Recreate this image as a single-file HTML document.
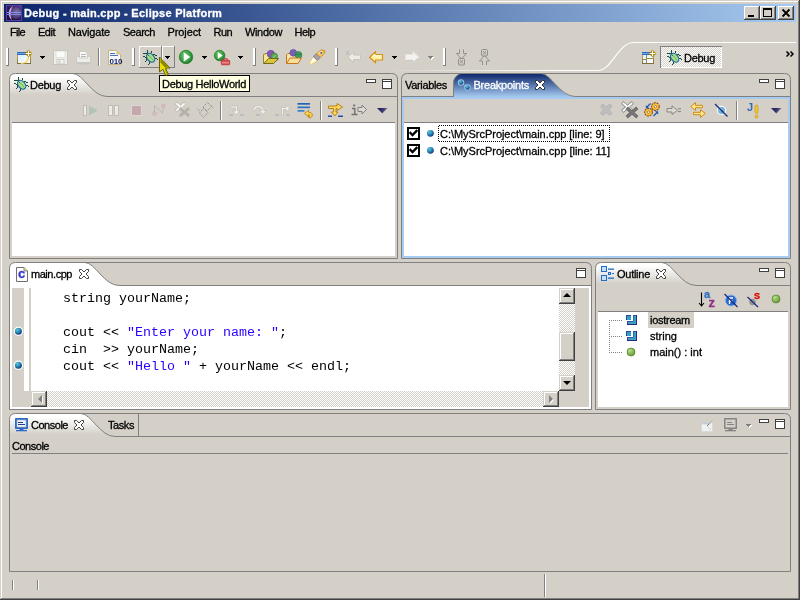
<!DOCTYPE html>
<html><head><meta charset="utf-8"><title>Debug - main.cpp - Eclipse Platform</title>
<style>
html,body{margin:0;padding:0}
body{width:800px;height:600px;overflow:hidden;background:#d4d0c8;position:relative;font-family:"Liberation Sans",sans-serif;font-size:11px;color:#000}
.t{position:absolute;white-space:pre;line-height:13px;font-size:11px;-webkit-text-stroke:0.3px currentColor}
.m{position:absolute;white-space:pre;font-family:"Liberation Mono",monospace;font-size:12px;line-height:17px;transform:scaleX(1.1111);transform-origin:0 0}
svg{position:absolute;left:0;top:0}
#tx{position:absolute;left:0;top:0;width:800px;height:600px;will-change:transform}
</style></head><body>
<svg width="800" height="600" viewBox="0 0 800 600">
<rect x="0" y="0" width="800" height="600" fill="#d4d0c8"/>
<rect x="0" y="599" width="800" height="1" fill="#404040"/>
<rect x="799" y="0" width="1" height="600" fill="#404040"/>
<rect x="1" y="598" width="798" height="1" fill="#808080"/>
<rect x="798" y="1" width="1" height="598" fill="#808080"/>
<rect x="1" y="1" width="797" height="1" fill="#ffffff"/>
<rect x="1" y="1" width="1" height="597" fill="#ffffff"/>
<defs><linearGradient id="tg" x1="0" x2="1" y1="0" y2="0"><stop offset="0" stop-color="#0a246a"/><stop offset="1" stop-color="#a6caf0"/></linearGradient><linearGradient id="tabg" x1="0" x2="0" y1="0" y2="1"><stop offset="0" stop-color="#fff"/><stop offset="0.15" stop-color="#fff"/><stop offset="0.9" stop-color="#d4d0c8"/><stop offset="1" stop-color="#d4d0c8"/></linearGradient><linearGradient id="tabb" x1="0" x2="0" y1="0" y2="1"><stop offset="0" stop-color="#0a246a"/><stop offset="1" stop-color="#a6caf0"/></linearGradient><linearGradient id="pl" gradientUnits="userSpaceOnUse" x1="380" x2="560" y1="0" y2="0"><stop offset="0" stop-color="#d4d0c8"/><stop offset="1" stop-color="#fff"/></linearGradient><pattern id="dith" width="2" height="2" patternUnits="userSpaceOnUse"><rect width="2" height="2" fill="#d4d0c8"/><rect width="1" height="1" fill="#fff"/><rect x="1" y="1" width="1" height="1" fill="#fff"/></pattern><radialGradient id="ball" cx="0.35" cy="0.3" r="0.7"><stop offset="0" stop-color="#64c0d8"/><stop offset="0.5" stop-color="#2a92bc"/><stop offset="1" stop-color="#143c80"/></radialGradient><radialGradient id="gball" cx="0.35" cy="0.3" r="0.7"><stop offset="0" stop-color="#b8e08a"/><stop offset="1" stop-color="#6a9a3a"/></radialGradient><radialGradient id="grun" cx="0.4" cy="0.35" r="0.7"><stop offset="0" stop-color="#7fd07f"/><stop offset="0.6" stop-color="#2f9a3a"/><stop offset="1" stop-color="#1a6a28"/></radialGradient><linearGradient id="mt" x1="0" x2="1" y1="0" y2="0.3"><stop offset="0" stop-color="#18185c"/><stop offset="0.6" stop-color="#38346c"/><stop offset="1" stop-color="#8c88a4"/></linearGradient><pattern id="fd" width="2" height="2" patternUnits="userSpaceOnUse"><rect width="1" height="1" fill="#000"/><rect x="1" y="1" width="1" height="1" fill="#000"/></pattern><pattern id="td" width="2" height="2" patternUnits="userSpaceOnUse"><rect x="1" width="1" height="1" fill="#808080"/><rect y="1" width="1" height="1" fill="#808080"/></pattern></defs>
<rect x="4" y="4" width="792" height="18" fill="url(#tg)"/>
<rect x="744" y="6" width="16" height="14" fill="#d4d0c8"/>
<rect x="744" y="6" width="15" height="1" fill="#ffffff"/>
<rect x="744" y="6" width="1" height="13" fill="#ffffff"/>
<rect x="744" y="19" width="16" height="1" fill="#404040"/>
<rect x="759" y="6" width="1" height="14" fill="#404040"/>
<rect x="745" y="18" width="14" height="1" fill="#808080"/>
<rect x="758" y="7" width="1" height="12" fill="#808080"/>
<rect x="760" y="6" width="16" height="14" fill="#d4d0c8"/>
<rect x="760" y="6" width="15" height="1" fill="#ffffff"/>
<rect x="760" y="6" width="1" height="13" fill="#ffffff"/>
<rect x="760" y="19" width="16" height="1" fill="#404040"/>
<rect x="775" y="6" width="1" height="14" fill="#404040"/>
<rect x="761" y="18" width="14" height="1" fill="#808080"/>
<rect x="774" y="7" width="1" height="12" fill="#808080"/>
<rect x="778" y="6" width="16" height="14" fill="#d4d0c8"/>
<rect x="778" y="6" width="15" height="1" fill="#ffffff"/>
<rect x="778" y="6" width="1" height="13" fill="#ffffff"/>
<rect x="778" y="19" width="16" height="1" fill="#404040"/>
<rect x="793" y="6" width="1" height="14" fill="#404040"/>
<rect x="779" y="18" width="14" height="1" fill="#808080"/>
<rect x="792" y="7" width="1" height="12" fill="#808080"/>
<rect x="748" y="15" width="6" height="2" fill="#000"/>
<rect x="763" y="8" width="9" height="9" fill="#000"/>
<rect x="764" y="10" width="7" height="6" fill="#d4d0c8"/>
<path d="M782.5 9.5 L789.5 16.5 M789.5 9.5 L782.5 16.5" stroke="#000" stroke-width="1.8" fill="none"/>
<g transform="translate(6,5)"><defs><linearGradient id="eg" x1="0" y1="1" x2="1" y2="0"><stop offset="0" stop-color="#120a30"/><stop offset="0.5" stop-color="#2c1c5c"/><stop offset="1" stop-color="#5a3a90"/></linearGradient><radialGradient id="es" cx="0.6" cy="0.4" r="0.6"><stop offset="0" stop-color="#7c74a4"/><stop offset="1" stop-color="#3c3068"/></radialGradient></defs><rect x="0.500" y="0.500" width="15" height="15" fill="url(#eg)" stroke="#5c3c9c"/><circle cx="9.500" cy="8" r="6" fill="url(#es)"/><path d="M6.500 1.500 C2 4 2 12 5.500 14.500 C3.800 11 4 5 6.500 1.500Z" fill="#f4e8ff" stroke="#c080e0" stroke-width="0.5"/><rect x="1" y="7" width="14" height="1" fill="#8890f0"/><rect x="1" y="9" width="14" height="1" fill="#8088e8"/></g>
<rect x="6" y="48" width="1" height="18" fill="#ffffff"/>
<rect x="7" y="48" width="1" height="18" fill="#ffffff"/>
<rect x="8" y="48" width="1" height="18" fill="#808080"/>
<rect x="6" y="65" width="3" height="1" fill="#808080"/>
<rect x="132" y="48" width="1" height="18" fill="#ffffff"/>
<rect x="133" y="48" width="1" height="18" fill="#ffffff"/>
<rect x="134" y="48" width="1" height="18" fill="#808080"/>
<rect x="132" y="65" width="3" height="1" fill="#808080"/>
<rect x="253" y="48" width="1" height="18" fill="#ffffff"/>
<rect x="254" y="48" width="1" height="18" fill="#ffffff"/>
<rect x="255" y="48" width="1" height="18" fill="#808080"/>
<rect x="253" y="65" width="3" height="1" fill="#808080"/>
<rect x="335" y="48" width="1" height="18" fill="#ffffff"/>
<rect x="336" y="48" width="1" height="18" fill="#ffffff"/>
<rect x="337" y="48" width="1" height="18" fill="#808080"/>
<rect x="335" y="65" width="3" height="1" fill="#808080"/>
<rect x="443" y="48" width="1" height="18" fill="#ffffff"/>
<rect x="444" y="48" width="1" height="18" fill="#ffffff"/>
<rect x="445" y="48" width="1" height="18" fill="#808080"/>
<rect x="443" y="65" width="3" height="1" fill="#808080"/>
<rect x="98" y="48" width="1" height="18" fill="#808080"/>
<rect x="99" y="48" width="1" height="18" fill="#ffffff"/>
<rect x="40" y="56" width="5" height="1" fill="#000"/>
<rect x="41" y="57" width="3" height="1" fill="#000"/>
<rect x="42" y="58" width="1" height="1" fill="#000"/>
<rect x="165" y="56" width="5" height="1" fill="#000"/>
<rect x="166" y="57" width="3" height="1" fill="#000"/>
<rect x="167" y="58" width="1" height="1" fill="#000"/>
<rect x="202" y="56" width="5" height="1" fill="#000"/>
<rect x="203" y="57" width="3" height="1" fill="#000"/>
<rect x="204" y="58" width="1" height="1" fill="#000"/>
<rect x="238" y="56" width="5" height="1" fill="#000"/>
<rect x="239" y="57" width="3" height="1" fill="#000"/>
<rect x="240" y="58" width="1" height="1" fill="#000"/>
<rect x="392" y="56" width="5" height="1" fill="#000"/>
<rect x="393" y="57" width="3" height="1" fill="#000"/>
<rect x="394" y="58" width="1" height="1" fill="#000"/>
<rect x="429" y="57" width="5" height="1" fill="#ffffff"/>
<rect x="430" y="58" width="3" height="1" fill="#ffffff"/>
<rect x="431" y="59" width="1" height="1" fill="#ffffff"/>
<rect x="428" y="56" width="5" height="1" fill="#808080"/>
<rect x="429" y="57" width="3" height="1" fill="#808080"/>
<rect x="430" y="58" width="1" height="1" fill="#808080"/>
<defs><linearGradient id="nf" x1="0" x2="0" y1="0" y2="1"><stop offset="0" stop-color="#e4b440"/><stop offset="1" stop-color="#80703c"/></linearGradient><linearGradient id="ni" x1="0" x2="1" y1="0" y2="1"><stop offset="0" stop-color="#d4ecff"/><stop offset="1" stop-color="#ffffff"/></linearGradient></defs>
<g transform="translate(17,50)"><rect x="0.500" y="2.500" width="13" height="11" fill="url(#ni)" stroke="url(#nf)"/><rect x="0" y="2" width="9" height="3" fill="#2c6cc0"/><rect x="0" y="3" width="9" height="1" fill="#6aa4e4"/><path d="M11.500 6.500 C11.500 10.500 9 13.500 4 13.500" stroke="#f8d050" stroke-width="1.200" fill="none"/><path d="M11.5 -0.2999999999999998 L15.3 3.5 L11.5 7.3 L7.7 3.5Z" fill="#a88414"/><path d="M11.5 0.7000000000000002 L11.5 6.3 M8.7 3.5 L14.3 3.5" stroke="#fffbe0" stroke-width="1.100"/></g>
<g transform="translate(53,50)"><rect x="0.500" y="0.500" width="14" height="14" fill="#efeeea" stroke="#c6c4be"/><rect x="3" y="1" width="9" height="6.500" fill="#fbfbfa" stroke="#d4d2cc" stroke-width="0.6"/><rect x="4" y="9.500" width="7" height="4.500" fill="#f6f5f2" stroke="#c4c2bc" stroke-width="0.8"/><rect x="5.500" y="10.500" width="2" height="3" fill="#cfcdc8"/></g>
<g transform="translate(76,50)"><rect x="0.500" y="6.500" width="14" height="6" fill="#eeede9" stroke="#cccac4"/><path d="M3.500 8 L3.500 1.500 L9 1.500 L11.500 4 L11.500 8Z" fill="#fafaf8" stroke="#c8c6c0" stroke-width="0.9"/><rect x="1" y="12" width="13" height="2.500" fill="#c8c6c0"/><rect x="5" y="4" width="5" height="1" fill="#b8b6b0"/><rect x="5" y="6" width="5" height="1" fill="#b8b6b0"/></g>
<g transform="translate(108,50)"><path d="M0.500 0.500 L8.500 0.500 L12.500 4.500 L12.500 14.500 L0.500 14.500Z" fill="#f4f8ff" stroke="#c8b478"/><path d="M8.500 0.500 L8.500 4.500 L12.500 4.500Z" fill="#e0c070"/><rect x="2" y="3" width="5" height="1" fill="#5070c0"/><rect x="2" y="5" width="8" height="1" fill="#5070c0"/></g>
<rect x="139" y="46" width="23" height="1" fill="#ffffff"/>
<rect x="139" y="46" width="1" height="22" fill="#ffffff"/>
<rect x="161" y="46" width="1" height="22" fill="#808080"/>
<rect x="139" y="67" width="23" height="1" fill="#808080"/>
<rect x="162" y="46" width="13" height="1" fill="#ffffff"/>
<rect x="162" y="46" width="1" height="22" fill="#ffffff"/>
<rect x="174" y="46" width="1" height="22" fill="#808080"/>
<rect x="162" y="67" width="13" height="1" fill="#808080"/>
<g transform="translate(143,50)"><g fill="#1c4c3c"><rect x="4" y="0" width="1" height="1"/><rect x="4" y="1" width="1" height="1"/><rect x="4" y="2" width="1" height="1"/><rect x="4" y="3" width="1" height="1"/><rect x="0" y="3" width="1" height="1"/><rect x="1" y="3" width="1" height="1"/><rect x="2" y="3" width="1" height="1"/><rect x="3" y="3" width="1" height="1"/><rect x="8" y="1" width="1" height="1"/><rect x="8" y="2" width="1" height="1"/><rect x="7" y="3" width="1" height="1"/><rect x="10" y="4" width="1" height="1"/><rect x="11" y="4" width="1" height="1"/><rect x="12" y="5" width="1" height="1"/><rect x="13" y="5" width="1" height="1"/><rect x="0" y="6" width="1" height="1"/><rect x="1" y="6" width="1" height="1"/><rect x="2" y="7" width="1" height="1"/><rect x="3" y="7" width="1" height="1"/><rect x="12" y="8" width="1" height="1"/><rect x="13" y="8" width="1" height="1"/><rect x="14" y="9" width="1" height="1"/><rect x="3" y="8" width="1" height="1"/><rect x="3" y="9" width="1" height="1"/><rect x="3" y="10" width="1" height="1"/><rect x="2" y="11" width="1" height="1"/><rect x="6" y="11" width="1" height="1"/><rect x="6" y="12" width="1" height="1"/><rect x="6" y="13" width="1" height="1"/><rect x="5" y="14" width="1" height="1"/></g><ellipse cx="7.700" cy="7.700" rx="3.400" ry="4.900" transform="rotate(-40 7.7 7.7)" fill="#a8dc90" stroke="#1c6c9c" stroke-width="1.2"/><path d="M6 5.500 L10 10" stroke="#68b858" stroke-width="1"/><rect x="5" y="5" width="1" height="1" fill="#2c7c2c"/></g>
<g transform="translate(179,50)"><circle cx="7" cy="7" r="6.700" fill="url(#grun)" stroke="#2a8430" stroke-width="0.9"/><circle cx="7" cy="7" r="5.200" fill="#4cac50" opacity="0.55"/><path d="M4.700 2.200 L11.200 7 L4.700 11.800Z" fill="#fff"/></g>
<g transform="translate(214,50)"><circle cx="5.600" cy="5.500" r="5.300" fill="url(#grun)" stroke="#2a8430" stroke-width="0.8"/><circle cx="5.600" cy="5.500" r="4" fill="#4cac50" opacity="0.55"/><path d="M3.800 2 L8.600 5.500 L3.800 9Z" fill="#fff"/><rect x="7.300" y="10.200" width="8.400" height="4.600" rx="0.800" fill="#d84444" stroke="#b02828" stroke-width="0.7"/><path d="M9.800 10.200 L9.800 8.800 L13.200 8.800 L13.200 10.200" fill="none" stroke="#c03030" stroke-width="1"/><rect x="8" y="11.800" width="7" height="0.900" fill="#f0a0a0"/><rect x="8" y="13.400" width="7" height="0.700" fill="#e88080"/></g>
<g transform="translate(263,50)"><path d="M0.500 13.500 L0.500 4.500 L3 3.500 L7 3.500 L7.500 8.500 L14.500 8.500 L15.500 9 L10 13.500Z" fill="#f4e890" stroke="#8a7a20" stroke-width="0.9"/><circle cx="7.800" cy="3.900" r="3.600" fill="#8858b8" stroke="#683c98" stroke-width="0.6"/><circle cx="11.300" cy="6.300" r="3.300" fill="#58a850" stroke="#387830" stroke-width="0.6"/><path d="M10 7.800 L12.800 5" stroke="#a8dca0" stroke-width="0.9"/><path d="M0.800 13.500 L5.500 8.500 L15.500 8.500 L10.500 13.500Z" fill="#dcc438" stroke="#6a6420" stroke-width="0.9"/></g>
<g transform="translate(286,50)"><path d="M0.500 13.500 L0.500 5 L2 3.500 L6 3.500 L7 5 L12 5 L12 8" fill="#fbe4b0" stroke="#c07818"/><circle cx="7.300" cy="2.800" r="3.400" fill="#7860b8" stroke="#5a48a0" stroke-width="0.6"/><circle cx="12.500" cy="5" r="3.400" fill="#3c9c5c" stroke="#287040" stroke-width="0.6"/><path d="M9.800 4.500 L15.200 4.500" stroke="#2a7c44" stroke-width="0.8"/><path d="M0.500 13.500 L4 8 L15.500 8 L12 13.500Z" fill="#fbdc98" stroke="#c07818"/></g>
<g transform="translate(309,49)"><path d="M0.300 14.200 L4.500 7.500 L9 11.500 L2.500 15.300Z" fill="#fffad0" stroke="#f0c040" stroke-width="0.7"/><path d="M1 14 L5 9 L7 11Z" fill="#ffffff"/><path d="M4.200 7.500 L7.500 4.500 L11.300 8.300 L8.300 11.500Z" fill="#a4a0ac" stroke="#787480" stroke-width="0.8"/><path d="M7.500 4.500 L12.500 0.800 L15.700 1.500 L15.700 4 L11.300 8.300Z" fill="#f8c458" stroke="#c88820" stroke-width="0.9"/><path d="M9 4.500 L13 1.800" stroke="#fff0c0" stroke-width="0.9"/><rect x="11.500" y="3" width="1.600" height="1.600" fill="#3060c0"/></g>
<g transform="translate(345,51)"><path d="M3 6 L8.500 1 L8.500 4 L15.500 4 L15.500 8.500 L8.500 8.500 L8.500 11.500Z" fill="#ecebe6" stroke="#c4c2bc" stroke-width="0.9"/><path d="M1 0.500 L4 3.500 M4 0.500 L1 3.500 M2.500 0 L2.500 4" stroke="#b0b4c4" stroke-width="0.7"/></g>
<g transform="translate(369,51)"><path d="M0.700 6.200 L6.500 0.700 L6.500 3.500 L13.500 3.500 L13.500 9 L6.500 9 L6.500 11.800Z" fill="#fdf0a0" stroke="#d89018" stroke-width="1.2" stroke-linejoin="round"/><path d="M2.500 6.200 L6 3 L6 5 L12.500 5" stroke="#fffce0" stroke-width="1" fill="none"/></g>
<g transform="translate(405,51)"><path d="M13.800 6.200 L8 0.700 L8 3.500 L0.700 3.500 L0.700 9 L8 9 L8 11.800Z" fill="#f4f3ef" stroke="#e6e4de" stroke-width="1.100" stroke-linejoin="round"/><path d="M1 9.500 L8 9.500 L8 12 L13 7" stroke="#c8c6c0" stroke-width="0.8" fill="none"/></g>
<g transform="translate(456,49)"><g fill="none" stroke="#8c8a84" stroke-width="0.9"><path d="M3.500 0.500 L3.500 4.500 L0.500 4.500 L5.500 10 L10.500 4.500 L7.500 4.500 L7.500 0.500"/><rect x="2.500" y="9.500" width="6" height="6.500" rx="1"/><path d="M4 11 L7 14.500 M7 11 L4 14.500"/></g></g>
<g transform="translate(479,49)"><g fill="none" stroke="#8c8a84" stroke-width="0.9"><path d="M3.500 16 L3.500 12 L0.500 12 L5.500 6.500 L10.500 12 L7.500 12 L7.500 16"/><rect x="2.500" y="0.500" width="6" height="6.500" rx="1"/><path d="M4 2 L7 5.500 M7 2 L4 5.500"/></g></g>
<path d="M380 70.500 L598 70.500 C612 70.500 618 42.500 634 42.500 L796 42.500" fill="none" stroke="url(#pl)" stroke-width="1.2"/>
<g transform="translate(642,50)"><rect x="0.500" y="2.500" width="11" height="11" fill="url(#ni)" stroke="url(#nf)"/><rect x="0" y="2" width="8" height="3" fill="#2c6cc0"/><rect x="0" y="3" width="8" height="1" fill="#6aa4e4"/><path d="M4.500 5 L4.500 13 M0.500 9.500 L4.500 9.500 M4.500 8.500 L11.500 8.500" stroke="#9a8a50" stroke-width="1" fill="none"/><path d="M10.5 -0.2999999999999998 L14.3 3.5 L10.5 7.3 L6.7 3.5Z" fill="#a88414"/><path d="M10.5 0.7000000000000002 L10.5 6.3 M7.7 3.5 L13.3 3.5" stroke="#fffbe0" stroke-width="1.100"/></g>
<rect x="660" y="46" width="62" height="22" fill="url(#dith)"/>
<rect x="660" y="46" width="62" height="1" fill="#808080"/>
<rect x="660" y="46" width="1" height="22" fill="#808080"/>
<rect x="661" y="67" width="61" height="1" fill="#ffffff"/>
<rect x="721" y="47" width="1" height="21" fill="#ffffff"/>
<g transform="translate(667,50)"><g fill="#1c4c3c"><rect x="4" y="0" width="1" height="1"/><rect x="4" y="1" width="1" height="1"/><rect x="4" y="2" width="1" height="1"/><rect x="4" y="3" width="1" height="1"/><rect x="0" y="3" width="1" height="1"/><rect x="1" y="3" width="1" height="1"/><rect x="2" y="3" width="1" height="1"/><rect x="3" y="3" width="1" height="1"/><rect x="8" y="1" width="1" height="1"/><rect x="8" y="2" width="1" height="1"/><rect x="7" y="3" width="1" height="1"/><rect x="10" y="4" width="1" height="1"/><rect x="11" y="4" width="1" height="1"/><rect x="12" y="5" width="1" height="1"/><rect x="13" y="5" width="1" height="1"/><rect x="0" y="6" width="1" height="1"/><rect x="1" y="6" width="1" height="1"/><rect x="2" y="7" width="1" height="1"/><rect x="3" y="7" width="1" height="1"/><rect x="12" y="8" width="1" height="1"/><rect x="13" y="8" width="1" height="1"/><rect x="14" y="9" width="1" height="1"/><rect x="3" y="8" width="1" height="1"/><rect x="3" y="9" width="1" height="1"/><rect x="3" y="10" width="1" height="1"/><rect x="2" y="11" width="1" height="1"/><rect x="6" y="11" width="1" height="1"/><rect x="6" y="12" width="1" height="1"/><rect x="6" y="13" width="1" height="1"/><rect x="5" y="14" width="1" height="1"/></g><ellipse cx="7.700" cy="7.700" rx="3.400" ry="4.900" transform="rotate(-40 7.7 7.7)" fill="#a8dc90" stroke="#1c6c9c" stroke-width="1.2"/><path d="M6 5.500 L10 10" stroke="#68b858" stroke-width="1"/><rect x="5" y="5" width="1" height="1" fill="#2c7c2c"/></g>
<path d="M786.500 51.500 L789 54 L786.500 56.500 M790.500 51.500 L793 54 L790.500 56.500" stroke="#000" stroke-width="1.500" fill="none"/>
<rect x="12" y="123" width="383" height="133" fill="#ffffff"/>
<rect x="12" y="122" width="383" height="1" fill="#808080"/>
<path d="M9.5 97 L9.5 79.5 Q9.5 73.5 15.5 73.5 L73 73.5 C83 73.5 92 96.5 107 96.5 L107 97 Z" fill="url(#tabg)"/>
<path d="M73 73.5 C83 73.5 92 96.5 107 96.5 L397 96.5" fill="none" stroke="#808080" stroke-width="1"/>
<path d="M9.5 258.5 L9.5 79.5 Q9.5 73.5 15.5 73.5 L391.5 73.5 Q397.5 73.5 397.5 79.5 L397.5 258.5 Z" fill="none" stroke="#808080" stroke-width="1"/>
<rect x="382" y="79" width="10" height="10" fill="#404040"/>
<rect x="383" y="80" width="8" height="1" fill="#ffffff"/>
<rect x="383" y="82" width="8" height="6" fill="#ffffff"/>
<rect x="366" y="79" width="10" height="4" fill="#404040"/>
<rect x="367" y="80" width="8" height="2" fill="#ffffff"/>
<g transform="translate(14,77)"><g fill="#1c4c3c"><rect x="4" y="0" width="1" height="1"/><rect x="4" y="1" width="1" height="1"/><rect x="4" y="2" width="1" height="1"/><rect x="4" y="3" width="1" height="1"/><rect x="0" y="3" width="1" height="1"/><rect x="1" y="3" width="1" height="1"/><rect x="2" y="3" width="1" height="1"/><rect x="3" y="3" width="1" height="1"/><rect x="8" y="1" width="1" height="1"/><rect x="8" y="2" width="1" height="1"/><rect x="7" y="3" width="1" height="1"/><rect x="10" y="4" width="1" height="1"/><rect x="11" y="4" width="1" height="1"/><rect x="12" y="5" width="1" height="1"/><rect x="13" y="5" width="1" height="1"/><rect x="0" y="6" width="1" height="1"/><rect x="1" y="6" width="1" height="1"/><rect x="2" y="7" width="1" height="1"/><rect x="3" y="7" width="1" height="1"/><rect x="12" y="8" width="1" height="1"/><rect x="13" y="8" width="1" height="1"/><rect x="14" y="9" width="1" height="1"/><rect x="3" y="8" width="1" height="1"/><rect x="3" y="9" width="1" height="1"/><rect x="3" y="10" width="1" height="1"/><rect x="2" y="11" width="1" height="1"/><rect x="6" y="11" width="1" height="1"/><rect x="6" y="12" width="1" height="1"/><rect x="6" y="13" width="1" height="1"/><rect x="5" y="14" width="1" height="1"/></g><ellipse cx="7.700" cy="7.700" rx="3.400" ry="4.900" transform="rotate(-40 7.7 7.7)" fill="#a8dc90" stroke="#1c6c9c" stroke-width="1.2"/><path d="M6 5.500 L10 10" stroke="#68b858" stroke-width="1"/><rect x="5" y="5" width="1" height="1" fill="#2c7c2c"/></g>
<path transform="translate(67,80)" d="M0.500 0.500 L2.500 0.500 L5 3 L7.500 0.500 L9.500 0.500 L9.500 2.500 L7 5 L9.500 7.500 L9.500 9.500 L7.500 9.500 L5 7 L2.500 9.500 L0.500 9.500 L0.500 7.500 L3 5 L0.500 2.500Z" fill="#ffffff" stroke="#404040" stroke-width="1"/>
<rect x="402" y="97" width="388" height="161" fill="#a6caf0"/>
<rect x="404" y="99" width="384" height="23" fill="#d4d0c8"/>
<rect x="404" y="123" width="384" height="133" fill="#ffffff"/>
<rect x="404" y="122" width="384" height="1" fill="#808080"/>
<path d="M453.5 97 L453.5 81.5 Q454.5 76.0 460.5 73.5 L541 73.5 C551 73.5 560 96.5 575 96.5 L575 97 Z" fill="url(#tabb)"/>
<path d="M453.5 97 L453.5 81.5 Q454.5 76.0 460.5 73.5" fill="none" stroke="#808080"/>
<path d="M541 73.5 C551 73.5 560 96.5 575 96.5 L790 96.5" fill="none" stroke="#808080" stroke-width="1"/>
<path d="M401.5 258.5 L401.5 79.5 Q401.5 73.5 407.5 73.5 L784.5 73.5 Q790.5 73.5 790.5 79.5 L790.5 258.5 Z" fill="none" stroke="#808080" stroke-width="1"/>
<rect x="402" y="96" width="52" height="1" fill="#808080"/>
<rect x="775" y="79" width="10" height="10" fill="#404040"/>
<rect x="776" y="80" width="8" height="1" fill="#ffffff"/>
<rect x="776" y="82" width="8" height="6" fill="#ffffff"/>
<rect x="759" y="79" width="10" height="4" fill="#404040"/>
<rect x="760" y="80" width="8" height="2" fill="#ffffff"/>
<path transform="translate(535,80)" d="M0.500 0.500 L2.500 0.500 L5 3 L7.500 0.500 L9.500 0.500 L9.500 2.500 L7 5 L9.500 7.500 L9.500 9.500 L7.500 9.500 L5 7 L2.500 9.500 L0.500 9.500 L0.500 7.500 L3 5 L0.500 2.500Z" fill="#ffffff" stroke="#303030" stroke-width="1"/>
<path d="M461 82.500 L467.500 87.500" stroke="#90b8e0" stroke-width="1"/>
<circle cx="461" cy="82.5" r="3.2" fill="#9cc4e8"/><circle cx="461" cy="82.5" r="2.2" fill="url(#ball)"/>
<circle cx="467.5" cy="87.5" r="3.2" fill="#9cc4e8"/><circle cx="467.5" cy="87.5" r="2.2" fill="url(#ball)"/>
<rect x="10" y="286" width="581" height="123" fill="#ffffff"/>
<path d="M9.5 286 L9.5 268.5 Q9.5 262.5 15.5 262.5 L85 262.5 C95 262.5 104 285.5 119 285.5 L119 286 Z" fill="#ffffff"/>
<path d="M85 262.5 C95 262.5 104 285.5 119 285.5 L591 285.5" fill="none" stroke="#808080" stroke-width="1"/>
<path d="M9.5 409.5 L9.5 268.5 Q9.5 262.5 15.5 262.5 L585.5 262.5 Q591.5 262.5 591.5 268.5 L591.5 409.5 Z" fill="none" stroke="#808080" stroke-width="1"/>
<rect x="576" y="268" width="10" height="10" fill="#404040"/>
<rect x="577" y="269" width="8" height="1" fill="#ffffff"/>
<rect x="577" y="271" width="8" height="6" fill="#ffffff"/>
<path transform="translate(79,269)" d="M0.500 0.500 L2.500 0.500 L5 3 L7.500 0.500 L9.500 0.500 L9.500 2.500 L7 5 L9.500 7.500 L9.500 9.500 L7.500 9.500 L5 7 L2.500 9.500 L0.500 9.500 L0.500 7.500 L3 5 L0.500 2.500Z" fill="#ffffff" stroke="#404040" stroke-width="1"/>
<rect x="598" y="312" width="190" height="95" fill="#ffffff"/>
<rect x="598" y="311" width="190" height="1" fill="#808080"/>
<path d="M595.5 286 L595.5 268.5 Q595.5 262.5 601.5 262.5 L662 262.5 C672 262.5 681 285.5 696 285.5 L696 286 Z" fill="url(#tabg)"/>
<path d="M662 262.5 C672 262.5 681 285.5 696 285.5 L790 285.5" fill="none" stroke="#808080" stroke-width="1"/>
<path d="M595.5 409.5 L595.5 268.5 Q595.5 262.5 601.5 262.5 L784.5 262.5 Q790.5 262.5 790.5 268.5 L790.5 409.5 Z" fill="none" stroke="#808080" stroke-width="1"/>
<rect x="775" y="268" width="10" height="10" fill="#404040"/>
<rect x="776" y="269" width="8" height="1" fill="#ffffff"/>
<rect x="776" y="271" width="8" height="6" fill="#ffffff"/>
<rect x="759" y="268" width="10" height="4" fill="#404040"/>
<rect x="760" y="269" width="8" height="2" fill="#ffffff"/>
<path transform="translate(656,269)" d="M0.500 0.500 L2.500 0.500 L5 3 L7.500 0.500 L9.500 0.500 L9.500 2.500 L7 5 L9.500 7.500 L9.500 9.500 L7.500 9.500 L5 7 L2.500 9.500 L0.500 9.500 L0.500 7.500 L3 5 L0.500 2.500Z" fill="#ffffff" stroke="#404040" stroke-width="1"/>
<path d="M9.5 437 L9.5 419.5 Q9.5 413.5 15.5 413.5 L81 413.5 C91 413.5 100 436.5 115 436.5 L115 437 Z" fill="url(#tabg)"/>
<path d="M81 413.5 C91 413.5 100 436.5 115 436.5 L790 436.5" fill="none" stroke="#808080" stroke-width="1"/>
<path d="M9.5 571.5 L9.5 419.5 Q9.5 413.5 15.5 413.5 L784.5 413.5 Q790.5 413.5 790.5 419.5 L790.5 571.5 Z" fill="none" stroke="#808080" stroke-width="1"/>
<rect x="775" y="419" width="10" height="10" fill="#404040"/>
<rect x="776" y="420" width="8" height="1" fill="#ffffff"/>
<rect x="776" y="422" width="8" height="6" fill="#ffffff"/>
<rect x="759" y="419" width="10" height="4" fill="#404040"/>
<rect x="760" y="420" width="8" height="2" fill="#ffffff"/>
<path transform="translate(74,420)" d="M0.500 0.500 L2.500 0.500 L5 3 L7.500 0.500 L9.500 0.500 L9.500 2.500 L7 5 L9.500 7.500 L9.500 9.500 L7.500 9.500 L5 7 L2.500 9.500 L0.500 9.500 L0.500 7.500 L3 5 L0.500 2.500Z" fill="#ffffff" stroke="#404040" stroke-width="1"/>
<rect x="138" y="414" width="1" height="23" fill="#808080"/>
<rect x="12" y="453" width="776" height="1" fill="#808080"/>
<rect x="12" y="580" width="1" height="10" fill="#808080"/>
<rect x="13" y="580" width="1" height="10" fill="#ffffff"/>
<rect x="37" y="580" width="1" height="10" fill="#808080"/>
<rect x="38" y="580" width="1" height="10" fill="#ffffff"/>
<rect x="544" y="574" width="1" height="23" fill="#808080"/>
<rect x="545" y="574" width="1" height="23" fill="#ffffff"/>
<g transform="translate(83,105)"><rect x="0.500" y="0.500" width="3" height="10" fill="#ecebe6" stroke="#b8b4ac" stroke-width="0.8"/><path d="M6 0.500 L15 5.500 L6 10.500Z" fill="#b4c4b4"/></g>
<g transform="translate(108,105)"><rect x="0.500" y="0.500" width="4" height="10" fill="#ecebe6" stroke="#b8b4ac" stroke-width="0.8"/><rect x="6.500" y="0.500" width="4" height="10" fill="#ecebe6" stroke="#b8b4ac" stroke-width="0.8"/></g>
<g transform="translate(131,105)"><rect x="0.500" y="0.500" width="10" height="10" fill="#c4a8ac" stroke="#e0d4d4" stroke-width="1"/></g>
<g transform="translate(152,104)"><path d="M2.500 9 L2.500 1.500 L10.500 9 L11.500 2" fill="none" stroke="#b8b4ac" stroke-width="0.9"/><circle cx="2.500" cy="9.500" r="1.800" fill="#dcc0c4" stroke="#c0a4a8" stroke-width="0.6"/><circle cx="11.500" cy="2" r="1.800" fill="#dcc0c4" stroke="#c0a4a8" stroke-width="0.6"/></g>
<g transform="translate(175.5,102.5)"><path d="M1.500 1.500 L8.5 7.5 M8.5 1.500 L1.500 7.5" stroke="#c2beb6" stroke-width="3.400" stroke-linecap="square"/><path d="M1.500 1.500 L8.5 7.5 M8.5 1.500 L1.500 7.5" stroke="#fbfbf9" stroke-width="1.800" stroke-linecap="square"/></g>
<g transform="translate(179.5,107.5)"><path d="M1.500 1.500 L8.5 7.5 M8.5 1.500 L1.500 7.5" stroke="#c0bcb4" stroke-width="3.400" stroke-linecap="square"/><path d="M1.500 1.500 L8.5 7.5 M8.5 1.500 L1.500 7.5" stroke="#b2aea8" stroke-width="1.800" stroke-linecap="square"/></g>
<path d="M207.500 102.500 L203 107 L207 111 L211.500 106.500 Z M203.500 108.500 L199.500 113 L203.500 117.500 L208 112.500 Z M197.500 108.500 L200 111.500 M210.500 105 L213.500 108.500" fill="none" stroke="#8a8a86" stroke-width="1" stroke-dasharray="1.2 1"/>
<rect x="220" y="101" width="1" height="19" fill="#808080"/>
<rect x="221" y="101" width="1" height="19" fill="#ffffff"/>
<g transform="translate(229,105)"><path d="M1 1 L8.500 1 L8.500 6 L11 6 L7.300 9.800 L3.600 6 L6.500 6 L6.500 3 L1 3Z" fill="#f0efea" stroke="#bebab2" stroke-width="0.7"/><rect x="0" y="9.200" width="4" height="1.600" fill="#b4b8c2"/><rect x="11" y="9.200" width="4" height="1.600" fill="#b4b8c2"/></g>
<g transform="translate(252,105)"><path d="M0.800 6 C0.500 -1 11.500 -1.500 12 5.500 L14.500 5.500 L10.800 9.300 L7.200 5.500 L10 5.500 C9.500 1.300 3 1.500 3 6Z" fill="#f0efea" stroke="#bebab2" stroke-width="0.7"/><rect x="4" y="9.200" width="4" height="1.600" fill="#b4b8c2"/></g>
<g transform="translate(275,104)"><path d="M6.500 11 L6.500 4.500 Q6.500 3.500 7.500 3.500 L11 3.500 L11 0.800 L14.800 4.500 L11 8.200 L11 5.500 L8.500 5.500 L8.500 11Z" fill="#f0efea" stroke="#bebab2" stroke-width="0.7"/><rect x="0" y="10.200" width="4" height="1.600" fill="#b4b8c2"/><rect x="11" y="10.200" width="4" height="1.600" fill="#b4b8c2"/></g>
<g transform="translate(297,103)"><rect x="0.500" y="0" width="12.500" height="1.700" fill="#2464b4"/><rect x="0.500" y="3.500" width="12.500" height="1.700" fill="#2c70c0"/><rect x="0.500" y="7" width="7" height="1.700" fill="#3880cc"/><path d="M7.500 10.500 L11.500 7.200 L11.500 9.200 C16 9 17 14.500 12 15 L12 12.800 C13.500 12.500 13 11.800 11.500 11.800 L11.500 13.800Z" fill="#fbd848" stroke="#b07810" stroke-width="0.8" stroke-linejoin="round"/></g>
<rect x="320" y="101" width="1" height="19" fill="#808080"/>
<rect x="321" y="101" width="1" height="19" fill="#ffffff"/>
<g transform="translate(328,103)"><path d="M0.500 3 L9 3 L9 0.500 L14.500 4 L9 7.500 L9 5.500 L8 5.500 L8 9 L10 9 L6.800 13 L3.500 9 L5.500 9 L5.500 5.500 L0.500 5.500Z" fill="#f8d860" stroke="#b87810" stroke-width="0.9"/><rect x="0" y="12.500" width="4" height="1.500" fill="#2050a0"/><rect x="10" y="12.500" width="5" height="1.500" fill="#2050a0"/></g>
<g transform="translate(351,104)"><path d="M7 3.500 L11 3.500 L11 1 L15.500 5.500 L11 10 L11 7.500 L7 7.500Z" fill="#dedad2" stroke="#787878" stroke-width="0.9"/><rect x="2" y="0.500" width="2.300" height="1.800" fill="#787878"/><path d="M1 4.500 L3.800 4.500 L3.800 10.500 M0.500 10.500 L6.500 10.500" stroke="#707070" stroke-width="1.400" fill="none"/></g>
<path d="M377 108 L387.6 108 L382.3 113.5Z" fill="url(#mt)"/>
<g transform="translate(600.5,104)"><path d="M0.500 1.500 L1.500 0.500 L3 0.500 L5.500 3 L8 0.500 L9.500 0.500 L10.500 1.500 L10.500 3 L8 5.500 L10.500 8 L10.500 9.500 L9.500 10.500 L8 10.500 L5.500 8 L3 10.500 L1.500 10.500 L0.500 9.500 L0.500 8 L3 5.500 L0.500 3Z" fill="#bebebe" stroke="#b0b0b0" stroke-width="0.8" transform="scale(1.05)"/></g>
<g transform="translate(622,102)"><path d="M1.500 1.500 L9.5 8.5 M9.5 1.500 L1.500 8.5" stroke="#8c8c8c" stroke-width="3.400" stroke-linecap="square"/><path d="M1.500 1.500 L9.5 8.5 M9.5 1.500 L1.500 8.5" stroke="#ffffff" stroke-width="1.800" stroke-linecap="square"/></g>
<g transform="translate(626.5,107.5)"><path d="M1.500 1.500 L9.5 8.5 M9.5 1.500 L1.500 8.5" stroke="#686868" stroke-width="3.400" stroke-linecap="square"/><path d="M1.500 1.500 L9.5 8.5 M9.5 1.500 L1.500 8.5" stroke="#787878" stroke-width="1.800" stroke-linecap="square"/></g>
<g transform="translate(644,103)"><circle cx="4.5" cy="9.2" r="3.700" fill="#f4c030" stroke="#8c3c18" stroke-width="1.300" stroke-dasharray="1.9 0.7"/><circle cx="4.5" cy="9.2" r="3.100" fill="#f6c838"/><circle cx="4.5" cy="9.2" r="1.200" fill="#fff" stroke="#703810" stroke-width="0.6"/><circle cx="11.4" cy="3.6" r="3.700" fill="#f4c030" stroke="#8c3c18" stroke-width="1.300" stroke-dasharray="1.9 0.7"/><circle cx="11.4" cy="3.6" r="3.100" fill="#f6c838"/><circle cx="11.4" cy="3.6" r="1.200" fill="#fff" stroke="#703810" stroke-width="0.6"/><path d="M6.500 0.500 L3 4" stroke="#1858b0" stroke-width="1.200"/><path d="M1.800 2 L1.800 5.200 L5 5.200Z" fill="#1858b0"/><path d="M9.500 13 L13 9.500" stroke="#1858b0" stroke-width="1.200"/><path d="M14.200 11.500 L14.200 8.300 L11 8.300Z" fill="#1858b0"/></g>
<g transform="translate(666,105)"><path d="M1 3.500 L6 3.500 L6 0.800 L11.500 5.200 L6 9.600 L6 7 L1 7Z" fill="#dcd8d0" stroke="#808080" stroke-width="0.9"/><path d="M12 3.800 L15 3.800 M12 6.600 L15 6.600" stroke="#808080" stroke-width="1"/></g>
<g transform="translate(690,102)"><path d="M0.700 4.500 L5.500 0.700 L5.500 3.300 L12.500 3.300 L12.500 5.700 L5.500 5.700 L5.500 8.300Z" fill="#fce890" stroke="#d08a10" stroke-width="1" stroke-linejoin="round"/><path d="M15.300 11.500 L10.500 7.700 L10.500 10.300 L3.500 10.300 L3.500 12.700 L10.500 12.700 L10.500 15.300Z" fill="#fce890" stroke="#d08a10" stroke-width="1" stroke-linejoin="round"/></g>
<g transform="translate(714,103)"><circle cx="7.500" cy="7.500" r="4.700" fill="#f0f6fa"/><circle cx="7.500" cy="7.500" r="3.400" fill="#6caed0"/><circle cx="6.500" cy="6.500" r="1.500" fill="#a4d0e4"/><path d="M1 1 L13.500 13.500" stroke="#182880" stroke-width="1.200"/></g>
<rect x="736" y="101" width="1" height="19" fill="#808080"/>
<rect x="737" y="101" width="1" height="19" fill="#ffffff"/>
<g transform="translate(754,105)"><rect x="1" y="0" width="3" height="8.500" rx="1.500" fill="#f0c830" stroke="#c09010" stroke-width="0.6"/><circle cx="2.500" cy="11.500" r="1.600" fill="#f0c830" stroke="#c09010" stroke-width="0.6"/></g>
<path d="M771 108 L781.6 108 L776.3 113.5Z" fill="url(#mt)"/>
<rect x="407" y="127" width="13" height="13" fill="#000"/>
<rect x="409" y="129" width="9" height="9" fill="#ffffff"/>
<path d="M410.5 133 L412.5 135 L416.5 131" fill="none" stroke="#000" stroke-width="2.300" stroke-linecap="square"/>
<rect x="407" y="144" width="13" height="13" fill="#000"/>
<rect x="409" y="146" width="9" height="9" fill="#ffffff"/>
<path d="M410.5 150 L412.5 152 L416.5 148" fill="none" stroke="#000" stroke-width="2.300" stroke-linecap="square"/>
<circle cx="430.4" cy="133.3" r="3.4" fill="url(#ball)"/>
<circle cx="430.4" cy="150.3" r="3.4" fill="url(#ball)"/>
<rect x="438" y="125" width="172" height="1" fill="url(#fd)"/>
<rect x="438" y="141" width="172" height="1" fill="url(#fd)"/>
<rect x="438" y="125" width="1" height="17" fill="url(#fd)"/>
<rect x="609" y="125" width="1" height="17" fill="url(#fd)"/>
<rect x="12" y="288" width="12" height="119" fill="#d4d0c8"/>
<rect x="29" y="288" width="2" height="103" fill="#d4d0c8"/>
<rect x="12" y="391" width="19" height="16" fill="#d4d0c8"/>
<rect x="575" y="288" width="14" height="119" fill="#d4d0c8"/>
<rect x="559" y="391" width="16" height="16" fill="#d4d0c8"/>
<rect x="559" y="288" width="16" height="103" fill="url(#dith)"/>
<rect x="559" y="288" width="16" height="16" fill="#d4d0c8"/>
<rect x="559" y="288" width="16" height="1" fill="#d4d0c8"/>
<rect x="559" y="288" width="1" height="16" fill="#d4d0c8"/>
<rect x="560" y="289" width="14" height="1" fill="#ffffff"/>
<rect x="560" y="289" width="1" height="14" fill="#ffffff"/>
<rect x="559" y="303" width="16" height="1" fill="#404040"/>
<rect x="574" y="288" width="1" height="16" fill="#404040"/>
<rect x="560" y="302" width="14" height="1" fill="#808080"/>
<rect x="573" y="289" width="1" height="14" fill="#808080"/>
<rect x="559" y="375" width="16" height="16" fill="#d4d0c8"/>
<rect x="559" y="375" width="16" height="1" fill="#d4d0c8"/>
<rect x="559" y="375" width="1" height="16" fill="#d4d0c8"/>
<rect x="560" y="376" width="14" height="1" fill="#ffffff"/>
<rect x="560" y="376" width="1" height="14" fill="#ffffff"/>
<rect x="559" y="390" width="16" height="1" fill="#404040"/>
<rect x="574" y="375" width="1" height="16" fill="#404040"/>
<rect x="560" y="389" width="14" height="1" fill="#808080"/>
<rect x="573" y="376" width="1" height="14" fill="#808080"/>
<rect x="559" y="332" width="16" height="29" fill="#d4d0c8"/>
<rect x="559" y="332" width="16" height="1" fill="#d4d0c8"/>
<rect x="559" y="332" width="1" height="29" fill="#d4d0c8"/>
<rect x="560" y="333" width="14" height="1" fill="#ffffff"/>
<rect x="560" y="333" width="1" height="27" fill="#ffffff"/>
<rect x="559" y="360" width="16" height="1" fill="#404040"/>
<rect x="574" y="332" width="1" height="29" fill="#404040"/>
<rect x="560" y="359" width="14" height="1" fill="#808080"/>
<rect x="573" y="333" width="1" height="27" fill="#808080"/>
<path d="M563 297 L571 297 L567 293Z" fill="#000"/><path d="M563 381 L571 381 L567 385Z" fill="#000"/>
<rect x="31" y="391" width="528" height="16" fill="url(#dith)"/>
<rect x="31" y="391" width="16" height="16" fill="#d4d0c8"/>
<rect x="31" y="391" width="16" height="1" fill="#d4d0c8"/>
<rect x="31" y="391" width="1" height="16" fill="#d4d0c8"/>
<rect x="32" y="392" width="14" height="1" fill="#ffffff"/>
<rect x="32" y="392" width="1" height="14" fill="#ffffff"/>
<rect x="31" y="406" width="16" height="1" fill="#404040"/>
<rect x="46" y="391" width="1" height="16" fill="#404040"/>
<rect x="32" y="405" width="14" height="1" fill="#808080"/>
<rect x="45" y="392" width="1" height="14" fill="#808080"/>
<rect x="543" y="391" width="16" height="16" fill="#d4d0c8"/>
<rect x="543" y="391" width="16" height="1" fill="#d4d0c8"/>
<rect x="543" y="391" width="1" height="16" fill="#d4d0c8"/>
<rect x="544" y="392" width="14" height="1" fill="#ffffff"/>
<rect x="544" y="392" width="1" height="14" fill="#ffffff"/>
<rect x="543" y="406" width="16" height="1" fill="#404040"/>
<rect x="558" y="391" width="1" height="16" fill="#404040"/>
<rect x="544" y="405" width="14" height="1" fill="#808080"/>
<rect x="557" y="392" width="1" height="14" fill="#808080"/>
<path d="M42 395 L42 403 L38 399Z" fill="#fff" transform="translate(1,1)"/><path d="M42 395 L42 403 L38 399Z" fill="#808080"/>
<path d="M549 395 L549 403 L553 399Z" fill="#fff" transform="translate(1,1)"/><path d="M549 395 L549 403 L553 399Z" fill="#808080"/>
<circle cx="18.4" cy="331.2" r="4.700" fill="#fff"/>
<circle cx="18.4" cy="331.2" r="3.5" fill="url(#ball)"/>
<circle cx="18.4" cy="365.2" r="4.700" fill="#fff"/>
<circle cx="18.4" cy="365.2" r="3.5" fill="url(#ball)"/>
<g transform="translate(16,267)"><path d="M0.500 0.500 L8 0.500 L11.500 4 L11.500 14.500 L0.500 14.500Z" fill="#fff" stroke="#707070"/><path d="M8 0.500 L8 4 L11.500 4" fill="#f0d890" stroke="#707070" stroke-width="0.8"/></g>
<rect x="609" y="320" width="1" height="33" fill="url(#td)"/>
<rect x="609" y="320" width="14" height="1" fill="url(#td)"/>
<rect x="609" y="336" width="14" height="1" fill="url(#td)"/>
<rect x="609" y="352" width="14" height="1" fill="url(#td)"/>
<g transform="translate(626,315)"><rect x="0" y="0" width="5" height="5" fill="#2848a0"/><rect x="1" y="1" width="4" height="4" fill="#34a0c4"/><path d="M7 0 L11 0 L11 10 L1 10 L1 6 L7 6Z" fill="#282880"/><path d="M7.500 0.500 L10 0.500 L10 9 L1.800 9 L1.800 6.500 L7.500 6.500Z" fill="#3aa2c4"/><rect x="7" y="0" width="3" height="1" fill="#3058a8"/><rect x="1" y="6" width="6" height="1" fill="#3058a8"/></g>
<g transform="translate(626,331)"><rect x="0" y="0" width="5" height="5" fill="#2848a0"/><rect x="1" y="1" width="4" height="4" fill="#34a0c4"/><path d="M7 0 L11 0 L11 10 L1 10 L1 6 L7 6Z" fill="#282880"/><path d="M7.500 0.500 L10 0.500 L10 9 L1.800 9 L1.800 6.500 L7.500 6.500Z" fill="#3aa2c4"/><rect x="7" y="0" width="3" height="1" fill="#3058a8"/><rect x="1" y="6" width="6" height="1" fill="#3058a8"/></g>
<circle cx="631" cy="352" r="4" fill="url(#gball)" stroke="#5a8a30" stroke-width="0.8"/>
<rect x="648" y="312" width="46" height="16" fill="#d4d0c8"/>
<g transform="translate(601,266)"><rect x="0.500" y="0.500" width="5" height="5" fill="#c4e0fc" stroke="#1c6cc8"/><rect x="0.500" y="9.500" width="5" height="5" fill="#c4e0fc" stroke="#1c6cc8"/><rect x="7" y="2.500" width="6" height="1.300" fill="#1c6cc8"/><rect x="7" y="11.500" width="6" height="1.300" fill="#1c6cc8"/><rect x="7" y="6" width="3" height="3" fill="#1c6cc8"/><rect x="8" y="7" width="1" height="1" fill="#c4e0fc"/><rect x="11" y="7" width="2" height="1" fill="#1c6cc8"/></g>
<path d="M701.500 292.500 L701.500 305.500 M699 303 L701.500 306 L704 303" stroke="#000" stroke-width="1.100" fill="none"/>
<g transform="translate(724,293)"><circle cx="7" cy="7.500" r="5.500" fill="#2868c8" stroke="#88b0e8" stroke-width="1"/><path d="M5.500 11 L5.500 5 L9 5 M5.500 8 L8.500 8" stroke="#fff" stroke-width="1.300" fill="none"/><path d="M0.500 1 L13.500 14" stroke="#182880" stroke-width="1.200"/></g>
<g transform="translate(747,292)"><circle cx="5.500" cy="10" r="2.800" fill="#989898" stroke="#707070" stroke-width="0.6"/><path d="M0.500 5 L11 15" stroke="#182880" stroke-width="1.200"/></g>
<circle cx="776" cy="299" r="4" fill="url(#gball)" stroke="#5a8a30" stroke-width="0.8"/>
<g transform="translate(15,418)"><rect x="0" y="0" width="13" height="11" rx="0.800" fill="#2c6cc8"/><rect x="1.500" y="1.500" width="10" height="8" fill="#8898a8"/><rect x="2.200" y="2.200" width="8.600" height="6.600" fill="#eaf5ff"/><rect x="3" y="4" width="5" height="1" fill="#283c8c"/><rect x="3" y="6" width="7" height="1" fill="#283c8c"/><rect x="4.500" y="11" width="4" height="1.200" fill="#2c6cc8"/><rect x="1" y="12" width="11" height="1.300" fill="#2c6cc8"/></g>
<g transform="translate(701,420)"><rect x="0.500" y="2.500" width="11" height="9" fill="#f0f1f3" stroke="#d8d8d8" stroke-width="0.8"/><rect x="0.500" y="2.500" width="8" height="1.800" fill="#c4c8d4"/><path d="M6.500 6.500 L10 10" stroke="#c8c8c8" stroke-width="0.8"/><path d="M6 6 L8.500 3.500" stroke="#606860" stroke-width="0.9"/><path d="M8.500 3.500 L11.500 0.500" stroke="#90b090" stroke-width="1.400" stroke-dasharray="1 1"/></g>
<g transform="translate(724,418)"><rect x="0" y="0" width="13" height="11" rx="0.800" fill="#848484"/><rect x="1.500" y="1.500" width="10" height="8" fill="#d4d0c8"/><rect x="2.200" y="2.200" width="8.600" height="6.600" fill="#d4d0c8"/><rect x="3" y="4" width="5" height="1" fill="#848484"/><rect x="3" y="6" width="7" height="1" fill="#848484"/><rect x="4.500" y="11" width="4" height="1.200" fill="#848484"/><rect x="1" y="12" width="11" height="1.300" fill="#848484"/></g>
<rect x="747" y="425" width="5" height="1" fill="#ffffff"/>
<rect x="748" y="426" width="3" height="1" fill="#ffffff"/>
<rect x="749" y="427" width="1" height="1" fill="#ffffff"/>
<rect x="746" y="424" width="5" height="1" fill="#808080"/>
<rect x="747" y="425" width="3" height="1" fill="#808080"/>
<rect x="748" y="426" width="1" height="1" fill="#808080"/>
<rect x="159" y="75" width="91" height="17" fill="#000"/>
<rect x="160" y="76" width="89" height="15" fill="#ffffe1"/>
<path d="M159.500 57 L159.500 72 L162.800 69.300 L165.800 75.600 L168.300 74.500 L165.500 68.200 L170 68 Z" fill="#e8e000" stroke="#585000" stroke-width="0.9" stroke-linejoin="round"/><path d="M160.500 58.800 L168.500 67.300 L165 67.500 L160.500 62.500Z" fill="#8c8400"/><path d="M165 69 L167.300 74.200" stroke="#a09800" stroke-width="1"/>
</svg>
<div id="tx">
<div class="t" style="left:24px;top:7px;letter-spacing:0.279px;color:#fff;font-weight:bold;">Debug - main.cpp - Eclipse Platform</div>
<div class="t" style="left:10px;top:26px;letter-spacing:-0.681px;">File</div>
<div class="t" style="left:38px;top:26px;letter-spacing:-0.489px;">Edit</div>
<div class="t" style="left:68px;top:26px;letter-spacing:-0.177px;">Navigate</div>
<div class="t" style="left:123px;top:26px;letter-spacing:-0.475px;">Search</div>
<div class="t" style="left:167.5px;top:26px;letter-spacing:-0.105px;">Project</div>
<div class="t" style="left:213.5px;top:26px;letter-spacing:-0.559px;">Run</div>
<div class="t" style="left:245px;top:26px;letter-spacing:-0.354px;">Window</div>
<div class="t" style="left:294.5px;top:26px;letter-spacing:-0.530px;">Help</div>
<div class="t" style="left:109.500px;top:56.500px;font-size:8px;font-weight:bold;color:#0a1a5a;letter-spacing:-0.2px;line-height:9px;-webkit-text-stroke:0">010</div>
<div class="t" style="left:684px;top:52px;letter-spacing:-0.283px;">Debug</div>
<div class="t" style="left:30px;top:79px;letter-spacing:-0.283px;">Debug</div>
<div class="t" style="left:405px;top:79px;letter-spacing:-0.338px;">Variables</div>
<div class="t" style="left:473.5px;top:79px;letter-spacing:-0.235px;color:#fff;">Breakpoints</div>
<div class="t" style="left:31px;top:268px;letter-spacing:-0.454px;">main.cpp</div>
<div class="t" style="left:617px;top:268px;letter-spacing:-0.265px;">Outline</div>
<div class="t" style="left:31px;top:419px;letter-spacing:-0.479px;">Console</div>
<div class="t" style="left:108px;top:419px;letter-spacing:-0.423px;">Tasks</div>
<div class="t" style="left:12px;top:440px;letter-spacing:-0.479px;">Console</div>
<div class="t" style="left:747px;top:101px;font-size:11px;font-weight:bold;color:#3468b8;line-height:13px;-webkit-text-stroke:0">J</div>
<div class="t" style="left:440px;top:128px;letter-spacing:-0.034px;">C:\MySrcProject\main.cpp [line: 9]</div>
<div class="t" style="left:440px;top:145px;letter-spacing:-0.028px;">C:\MySrcProject\main.cpp [line: 11]</div>
<div class="m" style="left:63px;top:291px">string yourName;</div>
<div class="m" style="left:63px;top:325px">cout &lt;&lt; <span style="color:#2a00ff">"Enter your name: "</span>;</div>
<div class="m" style="left:63px;top:342px">cin  &gt;&gt; yourName;</div>
<div class="m" style="left:63px;top:359px">cout &lt;&lt; <span style="color:#2a00ff">"Hello "</span> + yourName &lt;&lt; endl;</div>
<div class="t" style="left:18px;top:267px;font-size:13px;font-weight:bold;color:#3838d0;line-height:13px">c</div>
<div class="t" style="left:650px;top:314px;letter-spacing:-0.272px;">iostream</div>
<div class="t" style="left:650px;top:330px;letter-spacing:0.017px;">string</div>
<div class="t" style="left:650px;top:346px;letter-spacing:0.004px;">main() : int</div>
<div class="t" style="left:704px;top:288px;font-size:11px;font-weight:bold;color:#3a70c0;line-height:13px">a</div>
<div class="t" style="left:708.500px;top:296px;font-size:13px;font-weight:bold;color:#903088;line-height:13px">z</div>
<div class="t" style="left:754px;top:290.500px;font-size:9px;font-weight:bold;color:#e00000;line-height:10px">S</div>
<div class="t" style="left:162px;top:78px;letter-spacing:-0.316px;">Debug HelloWorld</div>
</div>
</body></html>
